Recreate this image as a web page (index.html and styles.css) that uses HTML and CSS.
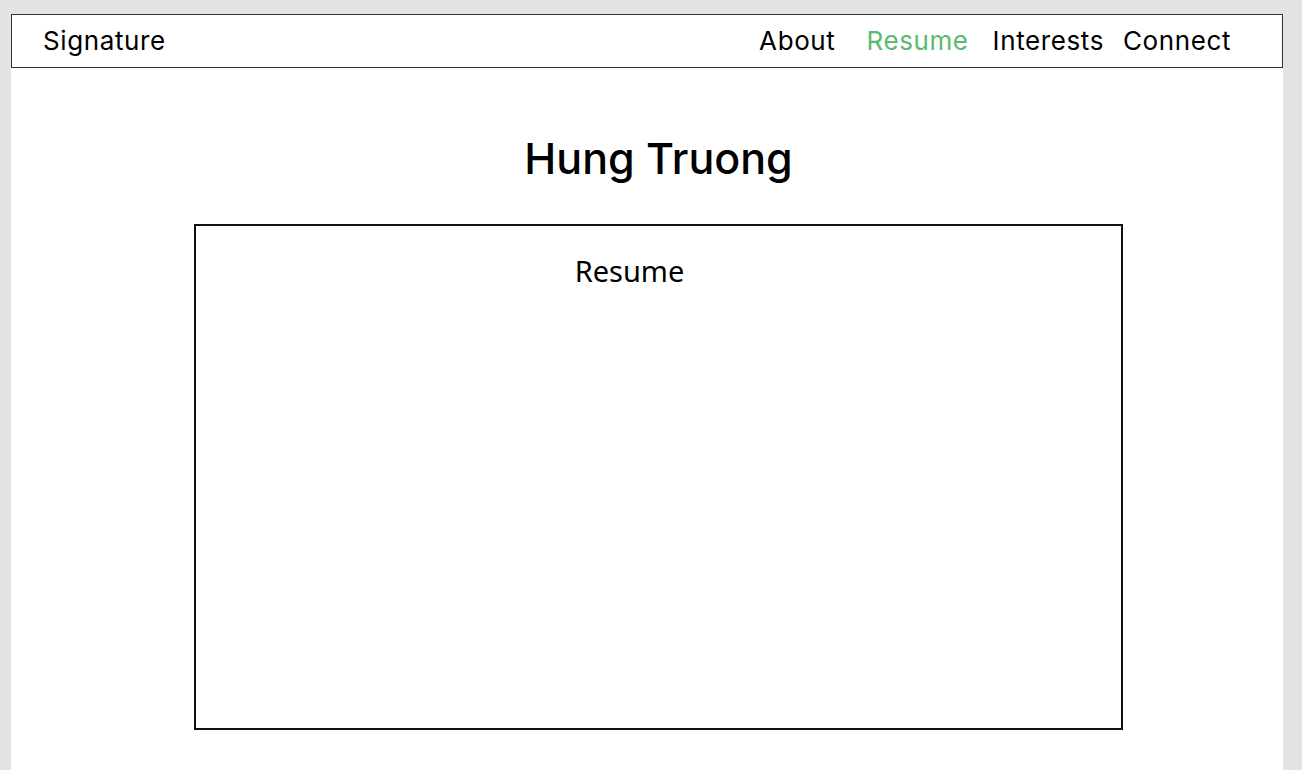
FILE: index.html
```html
<!DOCTYPE html>
<html lang="en">
<head>
  <meta charset="UTF-8">
  <title>Hung Truong</title>
  <link rel="stylesheet" href="styles.css">
</head>
<body>
  <div class="page">
    <header class="nav">
      <div class="brand">Signature</div>
      <nav class="links">
        <a href="#" class="about">About</a>
        <a href="#" class="active">Resume</a>
        <a href="#">Interests</a>
        <a href="#">Connect</a>
      </nav>
    </header>

    <main class="content">
      <h1>Hung Truong</h1>
      <section class="resume-box">
        <h2>Resume</h2>
      </section>
    </main>
  </div>
</body>
</html>
```

FILE: styles.css
```css
/* Base Reset */
* {
  box-sizing: border-box;
  margin: 0;
  padding: 0;
}
body {
  font-family: 'Inter', 'Noto Sans', sans-serif;
  background-color: #e3e3e3;
  color: #000;
  overflow: hidden;
}
.page {
  margin: 14px 0 0 11px;
  width: 1272px;
  min-height: 756px;
  background: #fff;
}
.nav {
  display: flex;
  align-items: center;
  justify-content: space-between;
  height: 54px;
  border: 1px solid #333;
  padding: 0 51px 2px 31px;
}
.brand {
  font-size: 26px;
  letter-spacing: 0.6px;
}
.links {
  display: flex;
  gap: 19px;
}
.links a {
  color: #000;
  text-decoration: none;
  font-size: 26px;
  letter-spacing: 0.6px;
}
.links a.about {
  margin-right: 12px;
}
.links a.active {
  color: #5cb971;
  margin-right: 5px;
}
.content {
  width: 929px;
  margin-left: 183px;
  padding-top: 64px;
}
h1 {
  text-align: center;
  font-size: 43px;
  font-weight: 500;
  line-height: 52px;
}
.resume-box {
  margin-top: 40px;
  height: 506px;
  border: 2px solid #111;
  padding: 27px 58px 0 0;
}
h2 {
  text-align: center;
  font-family: 'Noto Sans', sans-serif;
  font-weight: 400;
  font-size: 29px;
  line-height: 36px;
}
```
